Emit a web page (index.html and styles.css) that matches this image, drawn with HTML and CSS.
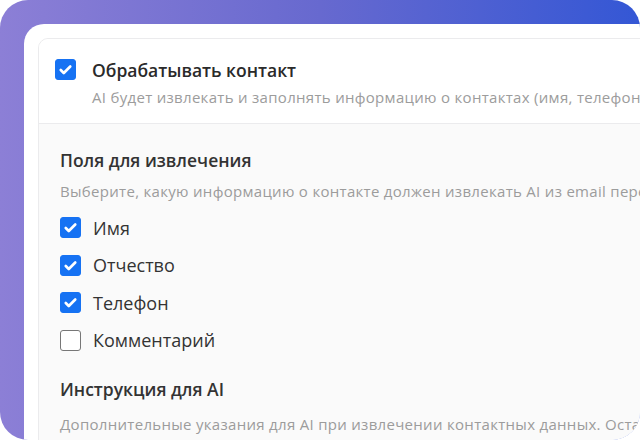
FILE: index.html
```html
<!DOCTYPE html>
<html lang="ru">
    <head>
        <meta charset="utf-8">
        <title>Обработка контакта</title>
        <link rel="stylesheet" href="styles.css">
    </head>
    <body>
    <div class="frame">
        <div class="panel">
            <div class="card">
                <div class="cardHead">
                    <span class="check on"><svg viewBox="0 0 20 20"><path d="M5 10.5l3.2 3.2L15 6.8"/></svg></span>
                    <div class="headText">
                        <div class="title">Обрабатывать контакт</div>
                        <div class="hint">AI будет извлекать и заполнять информацию о контактах (имя, телефон, отчество) из входящих писем</div>
                    </div>
                </div>
                <div class="cardBody">
                    <h3 class="sectionTitle">Поля для извлечения</h3>
                    <div class="hint">Выберите, какую информацию о контакте должен извлекать AI из email переписки</div>
                    <div class="fields">
                        <label class="field"><span class="check on"><svg viewBox="0 0 20 20"><path d="M5 10.5l3.2 3.2L15 6.8"/></svg></span>Имя</label>
                        <label class="field"><span class="check on"><svg viewBox="0 0 20 20"><path d="M5 10.5l3.2 3.2L15 6.8"/></svg></span>Отчество</label>
                        <label class="field"><span class="check on"><svg viewBox="0 0 20 20"><path d="M5 10.5l3.2 3.2L15 6.8"/></svg></span>Телефон</label>
                        <label class="field"><span class="check"></span>Комментарий</label>
                    </div>
                    <h3 class="sectionTitle second">Инструкция для AI</h3>
                    <div class="hint">Дополнительные указания для AI при извлечении контактных данных. Оставьте пустым для стандартного поведения</div>
                </div>
            </div>
        </div>
    </div>
    </body>
</html>
```

FILE: styles.css
```css
html,body{margin:0;padding:0;background:#fff;}
body{font-family:"Open Sans","Noto Sans",sans-serif;color:#333;}
.frame{
    width:640px;
    height:440px;
    border-radius:28px;
    overflow:hidden;
    background:linear-gradient(90deg,#8c7fd6 0%,#6769cf 50%,#3457d5 100%);
    padding:24px 0 0 24px;
    box-sizing:border-box;
}
.panel{
    width:1000px;
    height:600px;
    background:#fff;
    border-radius:20px 0 0 0;
    padding:14px 0 0 14px;
    box-sizing:border-box;
}
.card{
    width:1100px;
    height:700px;
    border:1px solid #ebebed;
    border-radius:10px;
    background:#fafafa;
    overflow:hidden;
}
.cardHead{
    display:flex;
    align-items:flex-start;
    background:#fff;
    padding:19px 16px 16px 16px;
    border-bottom:1px solid #ebebed;
}
.cardHead .check{margin-top:1px;margin-right:16px;}
.title{font-size:17.5px;line-height:24px;font-weight:600;color:#2a2a2a;}
.cardHead .hint{margin-top:5px;}
.hint{font-size:15px;line-height:20px;letter-spacing:0.3px;color:#9c9c9c;white-space:nowrap;}
.cardBody{padding:24px 21px 0 21px;}
.sectionTitle{margin:0 0 9px 0;font-size:17.5px;line-height:24px;font-weight:600;color:#333;}
.second{margin-top:26px;margin-bottom:13px;}
.fields{display:flex;flex-direction:column;gap:16.5px;margin-top:16px;}
.field{display:flex;align-items:center;height:21px;font-size:18px;color:#333;}
.check{
    width:21px;
    height:21px;
    border-radius:3px;
    border:1.5px solid #777;
    background:#fff;
    box-sizing:border-box;
    margin-right:12px;
    flex:none;
    display:block;
}
.check.on{background:#1672f3;border-color:#1672f3;}
.check svg{width:100%;height:100%;display:block;}
.check path{fill:none;stroke:#fff;stroke-width:2.8;stroke-linecap:round;stroke-linejoin:round;}
```
